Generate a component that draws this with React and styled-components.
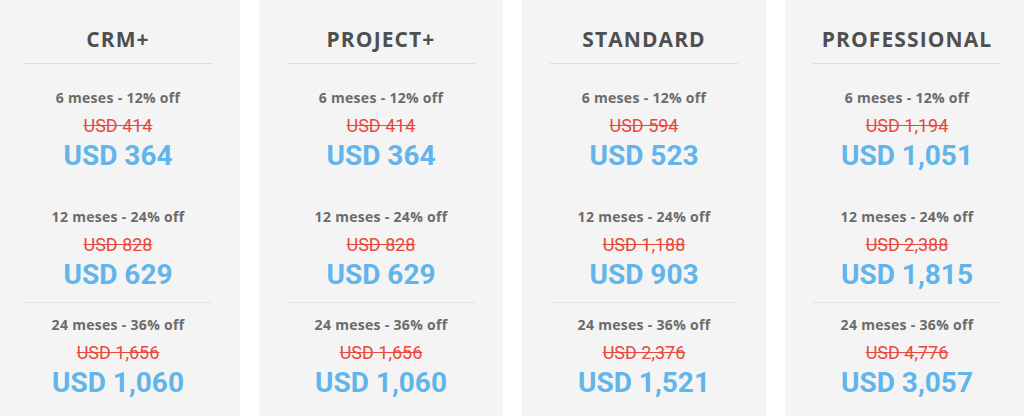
import React from "react";
import styled, { createGlobalStyle } from "styled-components";

const GlobalStyle = createGlobalStyle`
  html, body {
    margin: 0;
    padding: 0;
    background: #ffffff;
    overflow: hidden;
  }
`;

const PLANS = [
  {
    name: "CRM+",
    tiers: [
      { label: "6 meses - 12% off", was: "USD 414", now: "USD 364" },
      { label: "12 meses - 24% off", was: "USD 828", now: "USD 629" },
      { label: "24 meses - 36% off", was: "USD 1,656", now: "USD 1,060" },
    ],
  },
  {
    name: "PROJECT+",
    tiers: [
      { label: "6 meses - 12% off", was: "USD 414", now: "USD 364" },
      { label: "12 meses - 24% off", was: "USD 828", now: "USD 629" },
      { label: "24 meses - 36% off", was: "USD 1,656", now: "USD 1,060" },
    ],
  },
  {
    name: "STANDARD",
    tiers: [
      { label: "6 meses - 12% off", was: "USD 594", now: "USD 523" },
      { label: "12 meses - 24% off", was: "USD 1,188", now: "USD 903" },
      { label: "24 meses - 36% off", was: "USD 2,376", now: "USD 1,521" },
    ],
  },
  {
    name: "PROFESSIONAL",
    tiers: [
      { label: "6 meses - 12% off", was: "USD 1,194", now: "USD 1,051" },
      { label: "12 meses - 24% off", was: "USD 2,388", now: "USD 1,815" },
      { label: "24 meses - 36% off", was: "USD 4,776", now: "USD 3,057" },
    ],
  },
];

const App = () => {
  return (
    <>
      <GlobalStyle />
      <Page>
        <Grid>
          {PLANS.map((plan) => (
            <Card key={plan.name}>
              <Title>{plan.name}</Title>
              {plan.tiers.map((tier, index) => (
                <Tier key={tier.label} $rule={index === 1} $tight={index === 2}>
                  <Label>{tier.label}</Label>
                  <OldPrice>{tier.was}</OldPrice>
                  <Price>{tier.now}</Price>
                </Tier>
              ))}
            </Card>
          ))}
        </Grid>
      </Page>
    </>
  );
};

const Page = styled.div`
  height: 100vh;
  overflow: hidden;
`;

const Grid = styled.div`
  display: grid;
  grid-template-columns: repeat(4, 244px);
  column-gap: 19px;
  margin-left: -4px;
  height: 100%;
`;

const Card = styled.div`
  background: #f4f4f4;
  padding-top: 24px;
  text-align: center;
`;

const Title = styled.h2`
  margin: 0 28px;
  padding-bottom: 9px;
  border-bottom: 1px solid #dcdcdc;
  font-family: "Open Sans", sans-serif;
  font-weight: 700;
  font-size: 21px;
  line-height: 30px;
  letter-spacing: 1.1px;
  color: #4f4f4f;
`;

const Tier = styled.div`
  margin: 0 28px;
  padding: ${(p) => (p.$tight ? "12px" : "24px")} 0 10px;
  border-bottom: ${(p) => (p.$rule ? "1px solid #e4e4e4" : "none")};
`;

const Label = styled.div`
  margin-bottom: 6px;
  font-family: "Open Sans", sans-serif;
  font-weight: 700;
  font-size: 14px;
  line-height: 20px;
  letter-spacing: 0.3px;
  color: #6b6b6b;
`;

const OldPrice = styled.div`
  margin-bottom: 1px;
  font-family: Roboto, sans-serif;
  font-size: 18px;
  line-height: 24px;
  color: #e8493c;
  text-decoration: line-through;
`;

const Price = styled.div`
  font-family: Roboto, sans-serif;
  font-weight: 700;
  font-size: 28px;
  line-height: 34px;
  color: #62b5ea;
`;

export default App;
